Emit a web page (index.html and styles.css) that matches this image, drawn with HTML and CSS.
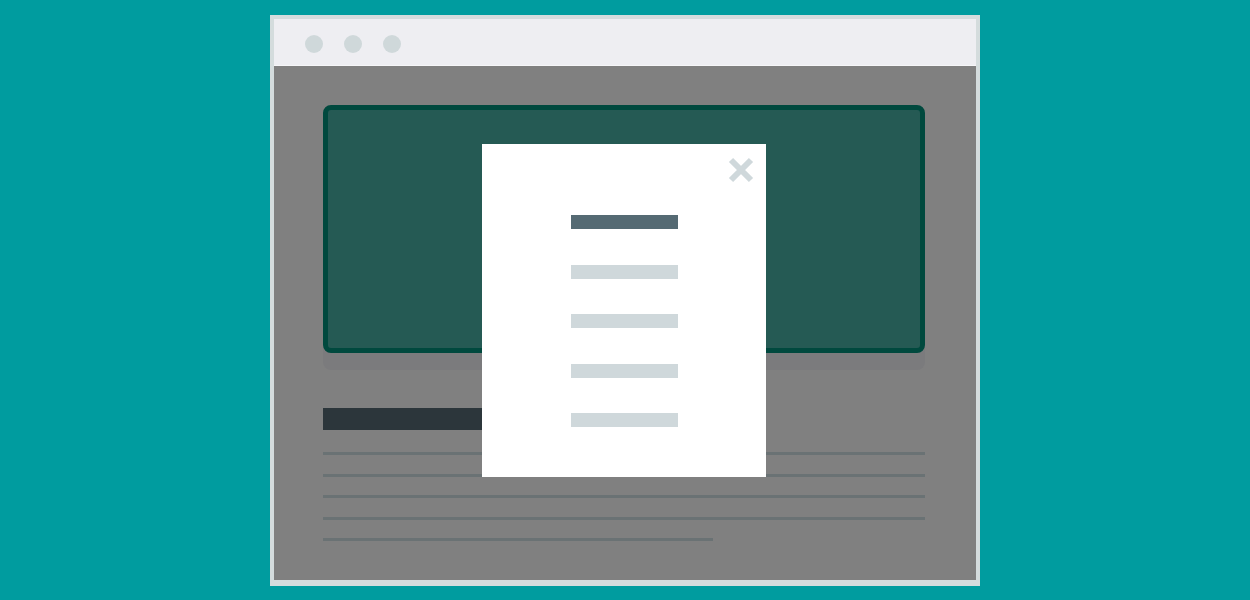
FILE: index.html
```html
<!DOCTYPE html>
<html>
<head>
<meta charset="utf-8">
<link rel="stylesheet" href="styles.css">
</head>
<body>
<div class="stage">
  <div class="frame">
    <div class="titlebar">
      <span class="dot"></span><span class="dot"></span><span class="dot"></span>
    </div>
    <div class="content">
      <div class="card"></div>
      <div class="heading"></div>
      <div class="line"></div>
      <div class="line"></div>
      <div class="line"></div>
      <div class="line"></div>
      <div class="line short"></div>
    </div>
    <div class="modal">
      <svg class="close" width="28" height="28" viewBox="0 0 28 28">
        <path d="M4 4 L24 24 M24 4 L4 24" stroke="#cfd8db" stroke-width="6" stroke-linecap="butt"/>
      </svg>
      <div class="menu">
        <div class="item active"></div>
        <div class="item"></div>
        <div class="item"></div>
        <div class="item"></div>
        <div class="item"></div>
      </div>
    </div>
  </div>
</div>
</body>
</html>
```
FILE: styles.css
```css
html, body { margin: 0; padding: 0; }
body { background: #009c9f; width: 1250px; height: 600px; overflow: hidden; }
.stage { padding-top: 15px; padding-left: 270px; }
.frame {
  position: relative;
  box-sizing: border-box;
  width: 710px; height: 571px;
  border: 4px solid #d4dcdd;
  border-bottom-width: 6px;
  background: #808080;
  display: flex; flex-direction: column;
}
.titlebar {
  height: 47px; background: #eeeef2;
  display: flex; align-items: center; gap: 21px;
  padding-left: 31px; padding-top: 3px; box-sizing: border-box;
  border-bottom: 1px solid #f6f6f8;
}
.dot { width: 18px; height: 18px; border-radius: 50%; background: #cfd8da; }
.content { flex: 1; padding: 39px 50px 0 49px; display: flex; flex-direction: column; }
.card {
  box-sizing: border-box; height: 248px; width: 602px;
  background: #255a54; border: 5px solid #00493e; border-radius: 8px;
  box-shadow: 0 17px 0 0 #7b7b7d;
}
.heading { margin-top: 55px; height: 22px; width: 320px; background: #2c363b; }
.line { margin-top: 22px; height: 3px; width: 602px; background: #6a7274; }
.line + .line { margin-top: 18.5px; }
.line.short { width: 390px; }
.modal {
  position: absolute; left: 208px; top: 125px;
  width: 284px; height: 333px; background: #ffffff;
}
.close { position: absolute; left: 245px; top: 12px; }
.menu { padding: 71px 0 0 89px; display: flex; flex-direction: column; gap: 35.5px; }
.item { width: 107px; height: 14px; background: #cfd8db; }
.item.active { background: #556a73; }
```
